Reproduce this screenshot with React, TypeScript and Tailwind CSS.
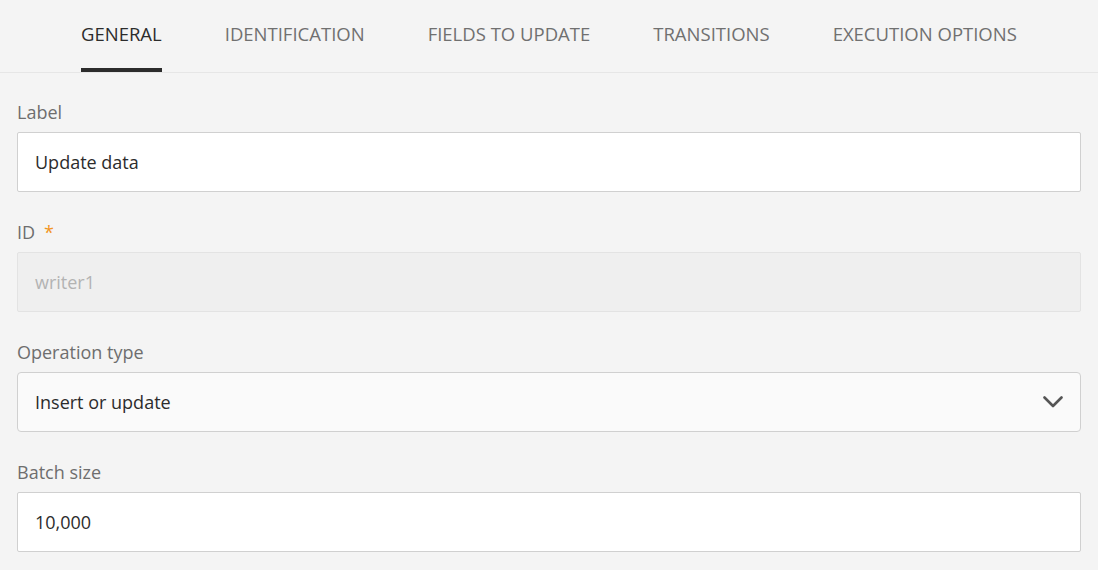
const tabs = ["GENERAL", "IDENTIFICATION", "FIELDS TO UPDATE", "TRANSITIONS", "EXECUTION OPTIONS"];

const FieldLabel = ({ text, required }: { text: string; required?: boolean }) => (
  <div className="h-[60px] flex items-end pb-[6px] text-[18px] text-[#6e6e6e]">
    {text}
    {required && <span className="ml-[9px] text-[#f29423]">*</span>}
  </div>
);

export default function App() {
  return (
    <div
      className="w-[1098px] h-[570px] overflow-hidden bg-[#f4f4f4]"
      style={{ fontFamily: '"Open Sans", sans-serif' }}
    >
      <div className="h-[73px] border-b border-[#e6e6e6] flex pl-[81px] gap-[63px]">
        {tabs.map((tab, i) => (
          <div
            key={tab}
            className={`relative h-full flex items-center pb-[5px] text-[18.5px] ${
              i === 0 ? "text-[#2c2c2c]" : "text-[#707070]"
            }`}
          >
            {tab}
            {i === 0 && <div className="absolute left-0 right-0 bottom-[0px] h-[4px] bg-[#2c2c2c]" />}
          </div>
        ))}
      </div>
      <div className="px-[17px] pt-[20px]">
        <div className="h-[39px] flex items-end pb-[6px] text-[18px] text-[#6e6e6e]">Label</div>
        <div className="h-[60px] bg-white border border-[#d0d0d0] rounded-[2px] flex items-center px-[17px] text-[18px] text-[#2c2c2c]">
          Update data
        </div>
        <FieldLabel text="ID" required />
        <div className="h-[60px] bg-[#efefef] border border-[#e3e3e3] rounded-[2px] flex items-center px-[17px] text-[18px] text-[#b3b3b3]">
          writer1
        </div>
        <FieldLabel text="Operation type" />
        <div className="h-[60px] bg-[#fafafa] border border-[#d0d0d0] rounded-[4px] flex items-center justify-between pl-[17px] pr-[17px] text-[18px] text-[#2c2c2c]">
          <span>Insert or update</span>
          <svg width="20" height="13" viewBox="0 0 20 13" fill="none">
            <path d="M1.5 1.5 L10 10 L18.5 1.5" stroke="#555555" strokeWidth="2.6" strokeLinecap="round" strokeLinejoin="round" />
          </svg>
        </div>
        <FieldLabel text="Batch size" />
        <div className="h-[60px] bg-white border border-[#d0d0d0] rounded-[2px] flex items-center px-[17px] text-[18px] text-[#2c2c2c]">
          10,000
        </div>
      </div>
    </div>
  );
}
